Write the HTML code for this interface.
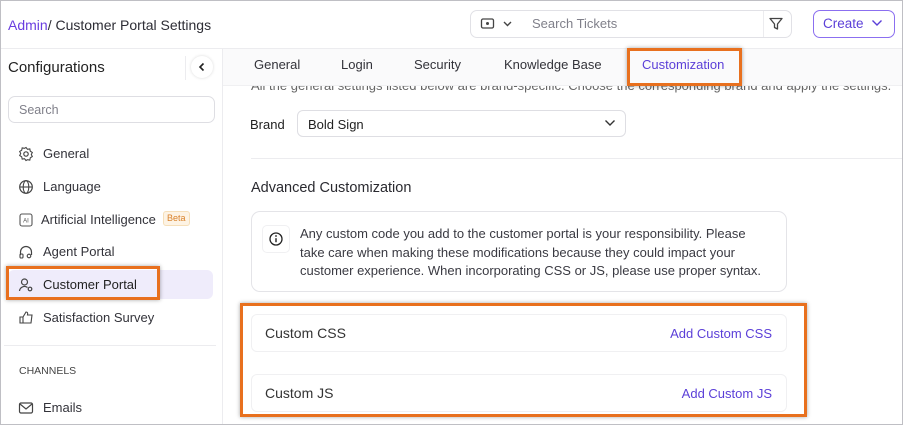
<!DOCTYPE html>
<html><head><style>
*{box-sizing:border-box;margin:0;padding:0}
body{width:903px;height:425px;overflow:hidden;background:#fff;font-family:"Liberation Sans",sans-serif;color:#2d2d35;position:relative}
.a{position:absolute}
.frame{left:0;top:0;width:903px;height:425px;border:1px solid #bfbfc4}
.t{white-space:nowrap}
.ob{border:3px solid #e8701e;box-shadow:0 0 4px rgba(0,0,0,.35)}
.mi{left:43px;font-size:13px;color:#33333a}
.ic{left:18px;width:16px;height:16px}
.tab{top:57px;font-size:13px;color:#33333a}
</style></head><body>
<div class="a" style="left:0;top:48px;width:903px;height:1px;background:#ececef"></div>
<div class="a" style="left:222px;top:48px;width:1px;height:377px;background:#ececef"></div>
<div class="a t" style="left:8px;top:17px;font-size:14px">
<span style="color:#6a3ee0">Admin</span>/ Customer Portal Settings</div>
<div class="a" style="left:470px;top:10px;width:322px;height:28px;border:1px solid #e1e1e6;border-radius:7px"></div>
<div class="a" style="left:763px;top:11px;width:1px;height:26px;background:#ececef"></div>
<svg class="a" style="left:480px;top:17px" width="40" height="14" viewBox="0 0 40 14"><rect x="1.5" y="2" width="12" height="9" rx="1.5" fill="none" stroke="#444" stroke-width="1.3"/><circle cx="7.5" cy="6.5" r="1.5" fill="#444"/><path d="M24 5l3.5 3.5L31 5" fill="none" stroke="#444" stroke-width="1.4"/></svg>
<div class="a t" style="left:532px;top:16px;font-size:13px;color:#80808a">Search Tickets</div>
<svg class="a" style="left:768px;top:16px" width="16" height="16" viewBox="0 0 16 16"><path d="M2 2.5h12l-4.5 5.5v5l-3-1.5v-3.5z" fill="none" stroke="#444" stroke-width="1.3" stroke-linejoin="round"/></svg>
<div class="a" style="left:813px;top:10px;width:82px;height:28px;border:1px solid #8b6ff0;border-radius:7px"></div>
<div class="a t" style="left:823px;top:16px;font-size:13.5px;color:#5b3fd8">Create</div>
<svg class="a" style="left:871px;top:18px" width="12" height="10"><path d="M1.5 2.5l4.5 4.5 4.5-4.5" fill="none" stroke="#5b3fd8" stroke-width="1.4"/></svg>
<div class="a t" style="left:8px;top:59px;font-size:15px;color:#222">Configurations</div>
<div class="a" style="left:185px;top:56px;width:1px;height:24px;background:#ececef"></div>
<div class="a" style="left:191px;top:56px;width:22px;height:22px;border-radius:50%;background:#fff;box-shadow:0 0 3px rgba(0,0,0,.15)"></div>
<svg class="a" style="left:197px;top:62px" width="10" height="10"><path d="M6.5 1.5l-3.5 3.5 3.5 3.5" fill="none" stroke="#222" stroke-width="1.6"/></svg>
<div class="a" style="left:8px;top:96px;width:207px;height:27px;border:1px solid #dedee3;border-radius:7px"></div>
<div class="a t" style="left:19px;top:103px;font-size:12.5px;color:#80808a">Search</div>
<div class="a" style="left:8px;top:270px;width:205px;height:29px;background:#efecfb;border-radius:6px"></div>
<svg class="a ic" style="top:146px" viewBox="0 0 16 16"><circle cx="8" cy="8" r="2.2" fill="none" stroke="#444" stroke-width="1.2"/><path d="M8 1.5l1.5 1.8 2.3-.4.5 2.3 2 1.3-1 2 1 2-2 1.3-.5 2.3-2.3-.4L8 14.5l-1.5-1.8-2.3.4-.5-2.3-2-1.3 1-2-1-2 2-1.3.5-2.3 2.3.4z" fill="none" stroke="#444" stroke-width="1.1"/></svg>
<div class="a t mi" style="top:146px">General</div>
<svg class="a ic" style="top:179px" viewBox="0 0 16 16"><circle cx="8" cy="8" r="6.3" fill="none" stroke="#444" stroke-width="1.2"/><ellipse cx="8" cy="8" rx="2.8" ry="6.3" fill="none" stroke="#444" stroke-width="1.1"/><path d="M1.7 8h12.6" stroke="#444" stroke-width="1.1"/></svg>
<div class="a t mi" style="top:179px">Language</div>
<svg class="a ic" style="top:212px" viewBox="0 0 16 16"><rect x="2" y="2" width="12" height="12" rx="2" fill="none" stroke="#555" stroke-width="1.1"/><text x="8" y="10.5" font-size="6" text-anchor="middle" fill="#555" font-family="Liberation Sans">AI</text></svg>
<div class="a t mi" style="top:212px;left:41px">Artificial Intelligence</div>
<div class="a t" style="left:163px;top:211px;height:15px;padding:1px 3px;font-size:9px;color:#d9822b;background:#fdf3e4;border:1px solid #f6dfb9;border-radius:3px">Beta</div>
<svg class="a ic" style="top:244px" viewBox="0 0 16 16"><path d="M2.5 11V8a5.5 5.5 0 0 1 11 0v3" fill="none" stroke="#444" stroke-width="1.2"/><rect x="2" y="10" width="3" height="4" rx="1" fill="none" stroke="#444" stroke-width="1.1"/><circle cx="11" cy="12" r="1.8" fill="none" stroke="#444" stroke-width="1.1"/></svg>
<div class="a t mi" style="top:244px">Agent Portal</div>
<svg class="a ic" style="top:277px" viewBox="0 0 16 16"><circle cx="6.5" cy="5" r="3" fill="none" stroke="#444" stroke-width="1.2"/><path d="M1.5 14a5 5 0 0 1 8-3.5" fill="none" stroke="#444" stroke-width="1.2"/><circle cx="12" cy="12" r="1.8" fill="none" stroke="#444" stroke-width="1.2"/></svg>
<div class="a t mi" style="top:277px;color:#222">Customer Portal</div>
<div class="a ob" style="left:6px;top:266px;width:154px;height:34px"></div>
<svg class="a ic" style="top:310px" viewBox="0 0 16 16"><path d="M2 7h3v6H2zM5 7l3-5c1.5 0 2 1 1.5 3H14l-1 8H5" fill="none" stroke="#444" stroke-width="1.1"/></svg>
<div class="a t mi" style="top:310px">Satisfaction Survey</div>
<div class="a" style="left:4px;top:345px;width:212px;height:1px;background:#ececef"></div>
<div class="a t" style="left:19px;top:365px;font-size:10.5px;color:#444">CHANNELS</div>
<svg class="a ic" style="top:400px" viewBox="0 0 16 16"><rect x="1.5" y="3" width="13" height="10" rx="1.5" fill="none" stroke="#444" stroke-width="1.2"/><path d="M2 4l6 5 6-5" fill="none" stroke="#444" stroke-width="1.2"/></svg>
<div class="a t mi" style="top:400px">Emails</div>
<div class="a t" style="left:251px;top:78px;font-size:13px;color:#666">All the general settings listed below are brand-specific. Choose the corresponding brand and apply the settings.</div>
<div class="a" style="left:223px;top:49px;width:680px;height:37px;background:#fafafb;border-bottom:1px solid #f0f0f2"></div>
<div class="a t tab" style="left:254px">General</div>
<div class="a t tab" style="left:341px">Login</div>
<div class="a t tab" style="left:414px">Security</div>
<div class="a t tab" style="left:504px">Knowledge Base</div>
<div class="a t tab" style="left:642px;color:#5b3fd8">Customization</div>
<div class="a ob" style="left:627px;top:48px;width:115px;height:38px"></div>
<div class="a t" style="left:250px;top:117px;font-size:13px;color:#222">Brand</div>
<div class="a" style="left:297px;top:110px;width:329px;height:27px;border:1px solid #dedee3;border-radius:6px"></div>
<div class="a t" style="left:308px;top:117px;font-size:13px;color:#222">Bold Sign</div>
<svg class="a" style="left:604px;top:118px" width="12" height="10"><path d="M1.5 2.5l4.5 4.5 4.5-4.5" fill="none" stroke="#333" stroke-width="1.4"/></svg>
<div class="a" style="left:251px;top:158px;width:652px;height:1px;background:#ececef"></div>
<div class="a t" style="left:251px;top:180px;font-size:14.5px;color:#2a2a30">Advanced Customization</div>
<div class="a" style="left:251px;top:211px;width:536px;height:81px;border:1px solid #e4e4e8;border-radius:9px"></div>
<div class="a" style="left:262px;top:225px;width:28px;height:28px;border:1px solid #f0f0f2;border-radius:5px"></div>
<svg class="a" style="left:268px;top:231px" width="16" height="16" viewBox="0 0 16 16"><circle cx="8" cy="8" r="6" fill="none" stroke="#222" stroke-width="1.3"/><path d="M8 7.2v4" stroke="#222" stroke-width="1.4"/><circle cx="8" cy="5" r=".9" fill="#222"/></svg>
<div class="a" style="left:300px;top:225px;font-size:13px;line-height:18.5px;color:#3a3a42;width:470px">Any custom code you add to the customer portal is your responsibility. Please<br>take care when making these modifications because they could impact your<br>customer experience. When incorporating CSS or JS, please use proper syntax.</div>
<div class="a" style="left:251px;top:314px;width:536px;height:38px;border:1px solid #f0f0f2;border-radius:6px"></div>
<div class="a t" style="left:265px;top:325px;font-size:14px;color:#333">Custom CSS</div>
<div class="a t" style="right:131px;top:326px;font-size:13px;color:#5b3fd8">Add Custom CSS</div>
<div class="a" style="left:251px;top:374px;width:536px;height:38px;border:1px solid #f0f0f2;border-radius:6px"></div>
<div class="a t" style="left:265px;top:385px;font-size:14px;color:#333">Custom JS</div>
<div class="a t" style="right:131px;top:386px;font-size:13px;color:#5b3fd8">Add Custom JS</div>
<div class="a ob" style="left:240px;top:303px;width:567px;height:114px"></div>
<div class="a frame"></div>
</body></html>
